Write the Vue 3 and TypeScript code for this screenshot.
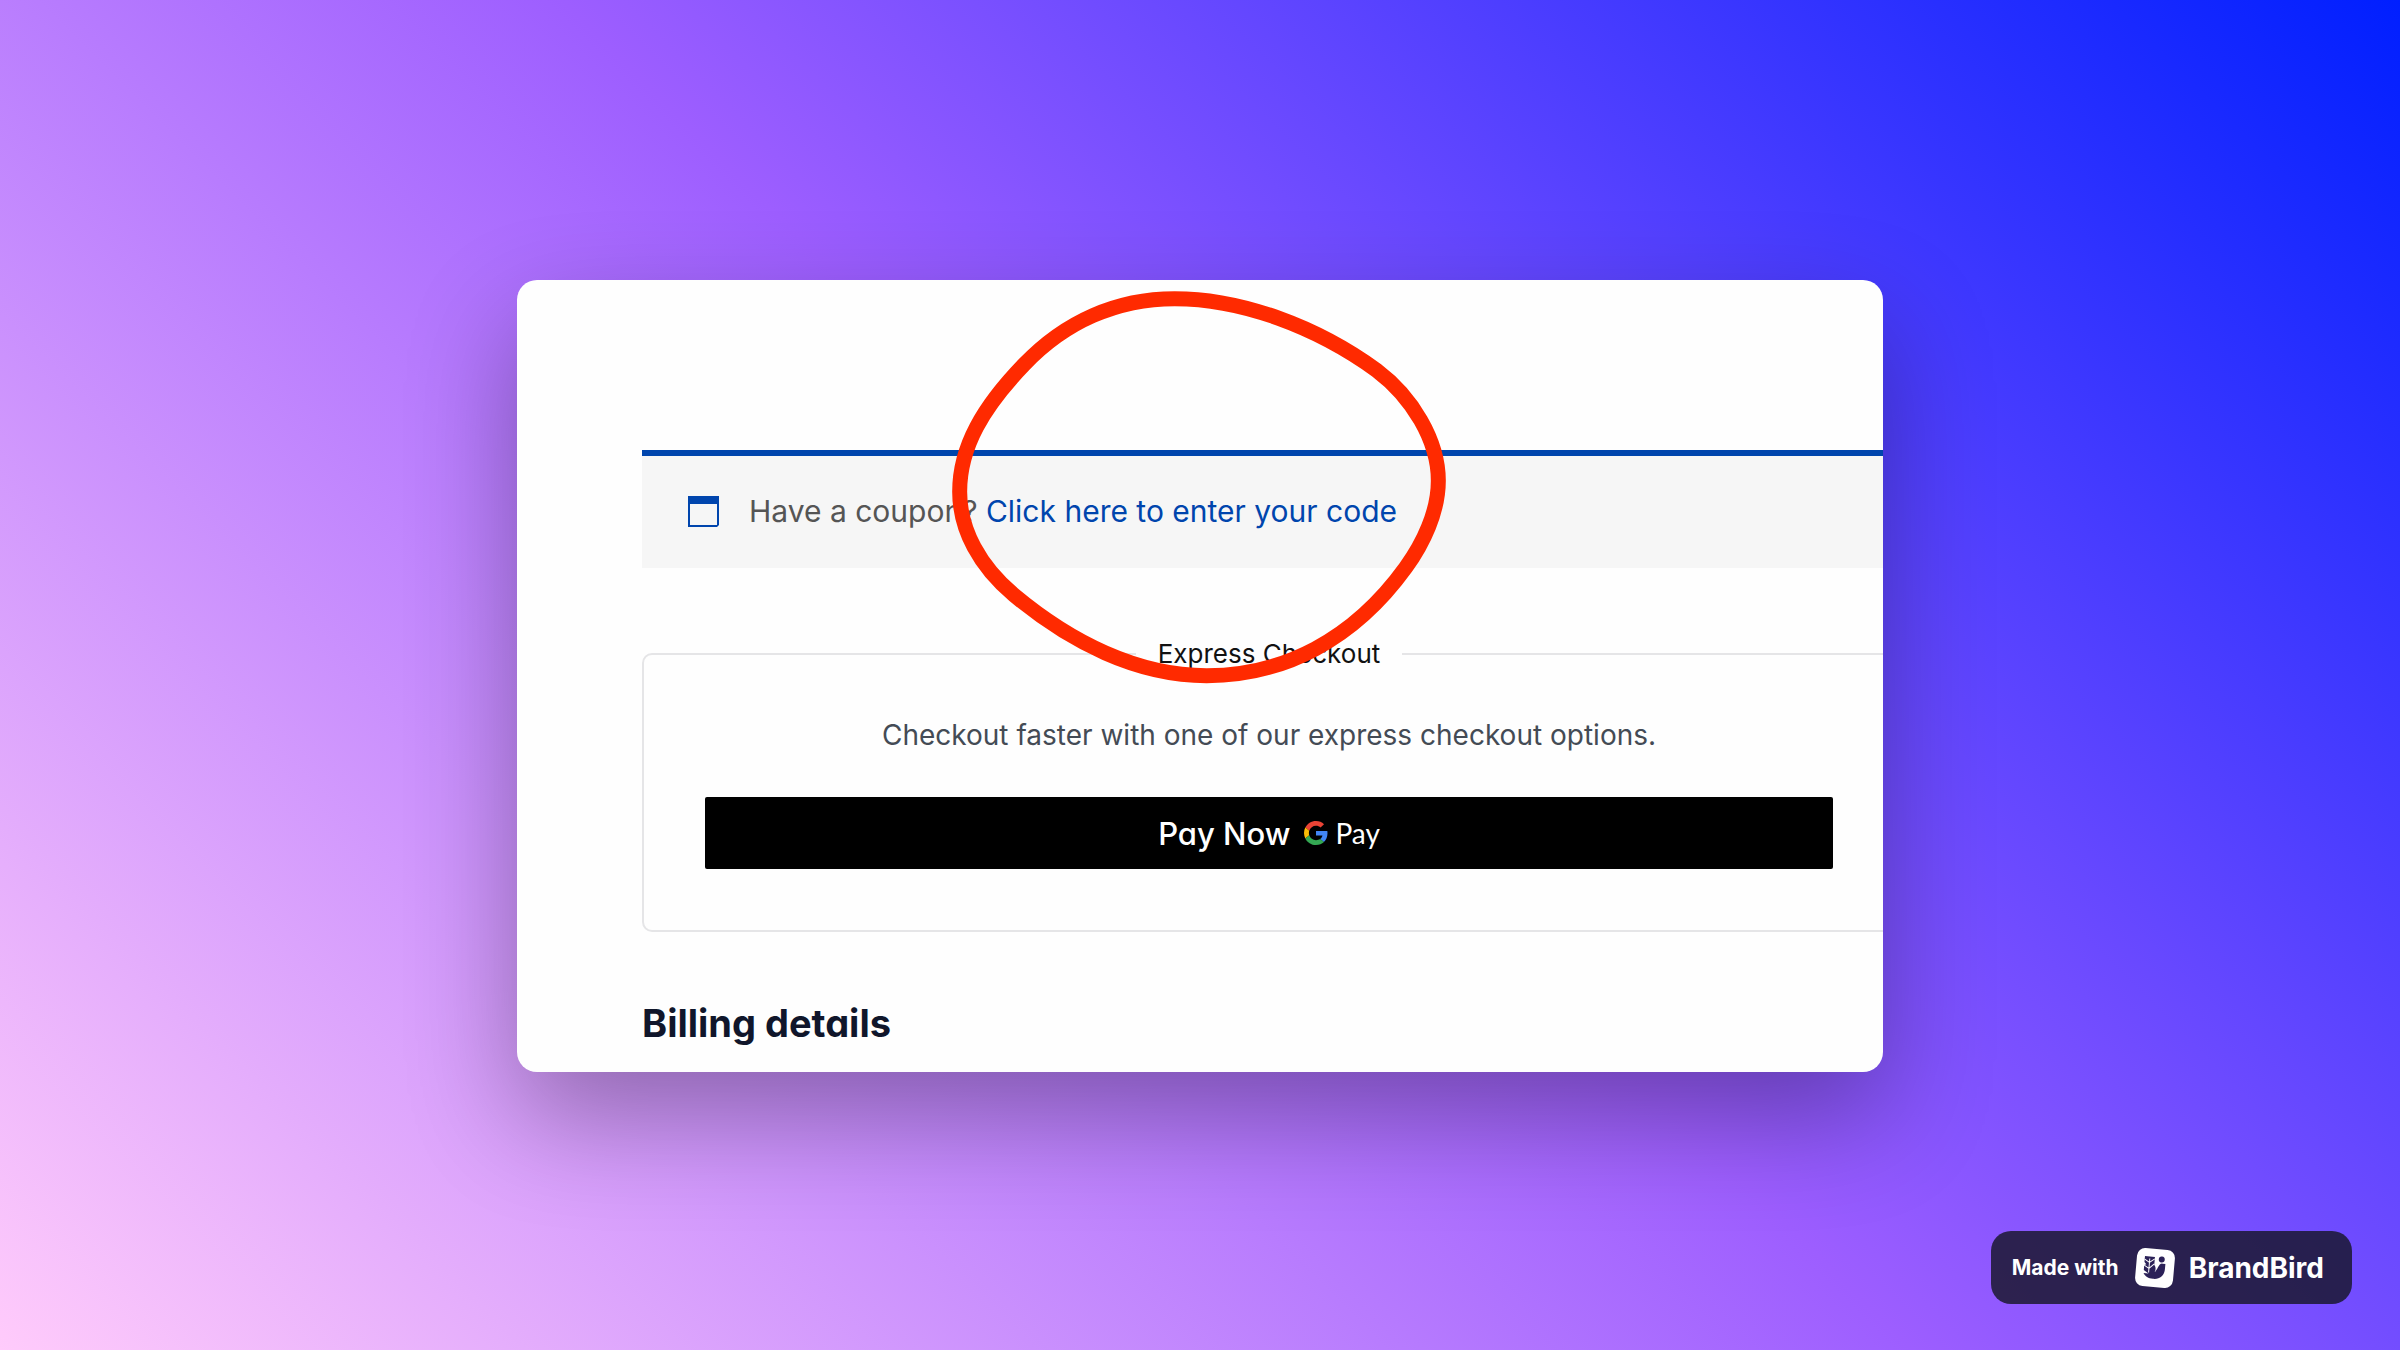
<script setup lang="ts">
const notice = { text: 'Have a coupon?', link: 'Click here to enter your code' }
const express = {
  title: 'Express Checkout',
  hint: 'Checkout faster with one of our express checkout options.',
}
</script>

<template>
  <main class="stage">
    <section class="card">
      <div class="coupon">
        <svg class="coupon-icon" viewBox="0 0 31 31" aria-hidden="true">
          <path d="M0 0H31V29L29 31H0ZM2 8V29H29V8Z" fill="#0045ad" fill-rule="evenodd" />
        </svg>
        <p class="coupon-text">{{ notice.text }} <a href="#coupon">{{ notice.link }}</a></p>
      </div>

      <fieldset class="express">
        <legend>{{ express.title }}</legend>
        <p class="hint">{{ express.hint }}</p>
        <button class="pay" type="button">
          <span class="pay-now">Pay Now</span>
          <span class="gpay">
            <svg class="google" viewBox="0 0 48 48" aria-hidden="true">
              <path fill="#ea4335" d="M24 9.5c3.54 0 6.71 1.22 9.21 3.6l6.85-6.85C35.9 2.38 30.47 0 24 0 14.62 0 6.51 5.38 2.56 13.22l7.98 6.19C12.43 13.72 17.74 9.5 24 9.5z" />
              <path fill="#4285f4" d="M46.98 24.55c0-1.57-.15-3.09-.38-4.55H24v9.02h12.94c-.58 2.96-2.26 5.48-4.78 7.18l7.73 6c4.51-4.18 7.09-10.36 7.09-17.65z" />
              <path fill="#fbbc05" d="M10.53 28.59A14.5 14.5 0 0 1 9.77 24c0-1.6.27-3.14.76-4.59l-7.98-6.19A23.9 23.9 0 0 0 0 24c0 3.88.92 7.54 2.56 10.78l7.97-6.19z" />
              <path fill="#34a853" d="M24 48c6.48 0 11.93-2.13 15.89-5.81l-7.73-6c-2.15 1.45-4.92 2.3-8.16 2.3-6.26 0-11.57-4.22-13.47-9.91l-7.98 6.19C6.51 42.62 14.62 48 24 48z" />
            </svg>
            <span>Pay</span>
          </span>
        </button>
      </fieldset>

      <h2>Billing details</h2>

      <svg class="marker" viewBox="0 0 1560 1260" aria-hidden="true">
        <path
          d="M704 86C905 86 1130 170 1310 301C1415 380 1495 510 1495 632C1495 725 1450 820 1397 893C1240 1110 1030 1217 800 1217C590 1217 390 1115 222 975C120 890 59 780 59 665C59 530 130 410 253 283C375 155 530 86 704 86Z"
          fill="none" stroke="#ff2a00" stroke-width="45" />
      </svg>
    </section>

    <a class="badge" href="#brandbird">
      <span class="made">Made with</span>
      <svg class="bird" viewBox="0 0 40 40" aria-hidden="true">
        <g transform="rotate(5 20 20)">
          <rect x="1" y="1" width="38" height="38" rx="8" fill="#fff" />
          <g fill="#2b2158">
            <path d="M9 9H19V17C21 19 21 22 20 24C23 22 23 15 27 15H30V20C30 27 26 31 19 31C14 31 11 29 9 26H14L9 23V18L11 17L9 15Z" />
            <circle cx="26" cy="11" r="3" />
          </g>
          <g fill="none" stroke="#fff" stroke-width="1">
            <path d="M9 12L14 15L19 11M9 18L14 21L19 16M14 11V25" />
          </g>
        </g>
      </svg>
      <span class="brand">BrandBird</span>
    </a>
  </main>
</template>

<style>
body {
  margin: 0;
}
</style>

<style scoped>
.stage {
  position: relative;
  box-sizing: border-box;
  min-height: 100vh;
  padding: 2px 517px 0;
  display: flex;
  align-items: center;
  font-family: Inter, "Liberation Sans", sans-serif;
  background: linear-gradient(45deg, #ffcbfb 0%, #9d5eff 51%, #001fff 100%);
}

.card {
  position: relative;
  box-sizing: border-box;
  flex: 1;
  min-width: 0;
  padding: 170px 0 22px 125px;
  overflow: hidden;
  border-radius: 20px;
  background: #fefefe;
  box-shadow: 0 45px 110px rgba(0, 0, 0, 0.31);
}

.coupon {
  display: flex;
  align-items: center;
  gap: 30px;
  height: 110px;
  padding: 0 0 2px 46px;
  border-top: 6px solid #0045ad;
  background: #f6f6f6;
}

.coupon-icon {
  width: 31px;
  height: 31px;
}

.coupon-text {
  margin: 0;
  font-size: 30px;
  line-height: 40px;
  color: #555;
}

.coupon-text a {
  color: #0045ad;
  text-decoration: none;
}

.express {
  min-width: 0;
  margin: 66px -13px 0 0;
  padding: 41px 61px 61px;
  border: 2px solid #e5e5e7;
  border-radius: 10px;
}

.express legend {
  margin: 0 auto;
  padding: 0 22px;
  font-size: 26px;
  line-height: 40px;
  color: #111;
}

.hint {
  margin: 0 0 42px;
  font-size: 28px;
  line-height: 40px;
  text-align: center;
  color: #444b55;
}

.pay {
  display: flex;
  align-items: center;
  justify-content: center;
  gap: 14px;
  width: 100%;
  height: 72px;
  padding: 0;
  border: 0;
  border-radius: 2px;
  background: #000;
  color: #fff;
  font-family: inherit;
}

.pay-now {
  font-size: 31px;
  font-weight: 500;
  font-feature-settings: "cv11";
}

.gpay {
  display: flex;
  align-items: center;
  gap: 7px;
  font-family: Lato, sans-serif;
  font-size: 28px;
}

.google {
  width: 24px;
  height: 24px;
}

h2 {
  margin: 64px 0 0;
  font-size: 38px;
  font-weight: 700;
  font-feature-settings: "cv11";
  line-height: 54px;
  color: #10162b;
}

.marker {
  position: absolute;
  top: -10px;
  left: 423px;
  width: 520px;
  height: 420px;
  pointer-events: none;
}

.badge {
  position: absolute;
  right: 48px;
  bottom: 46px;
  box-sizing: border-box;
  display: flex;
  align-items: center;
  height: 73px;
  padding: 0 28px 0 21px;
  border-radius: 20px;
  background: rgba(20, 20, 35, 0.8);
  color: #fff;
  font-weight: 700;
  text-decoration: none;
}

.made {
  font-size: 21px;
}

.bird {
  width: 40px;
  height: 40px;
  margin: 0 14px 0 16px;
}

.brand {
  font-size: 28px;
}
</style>
